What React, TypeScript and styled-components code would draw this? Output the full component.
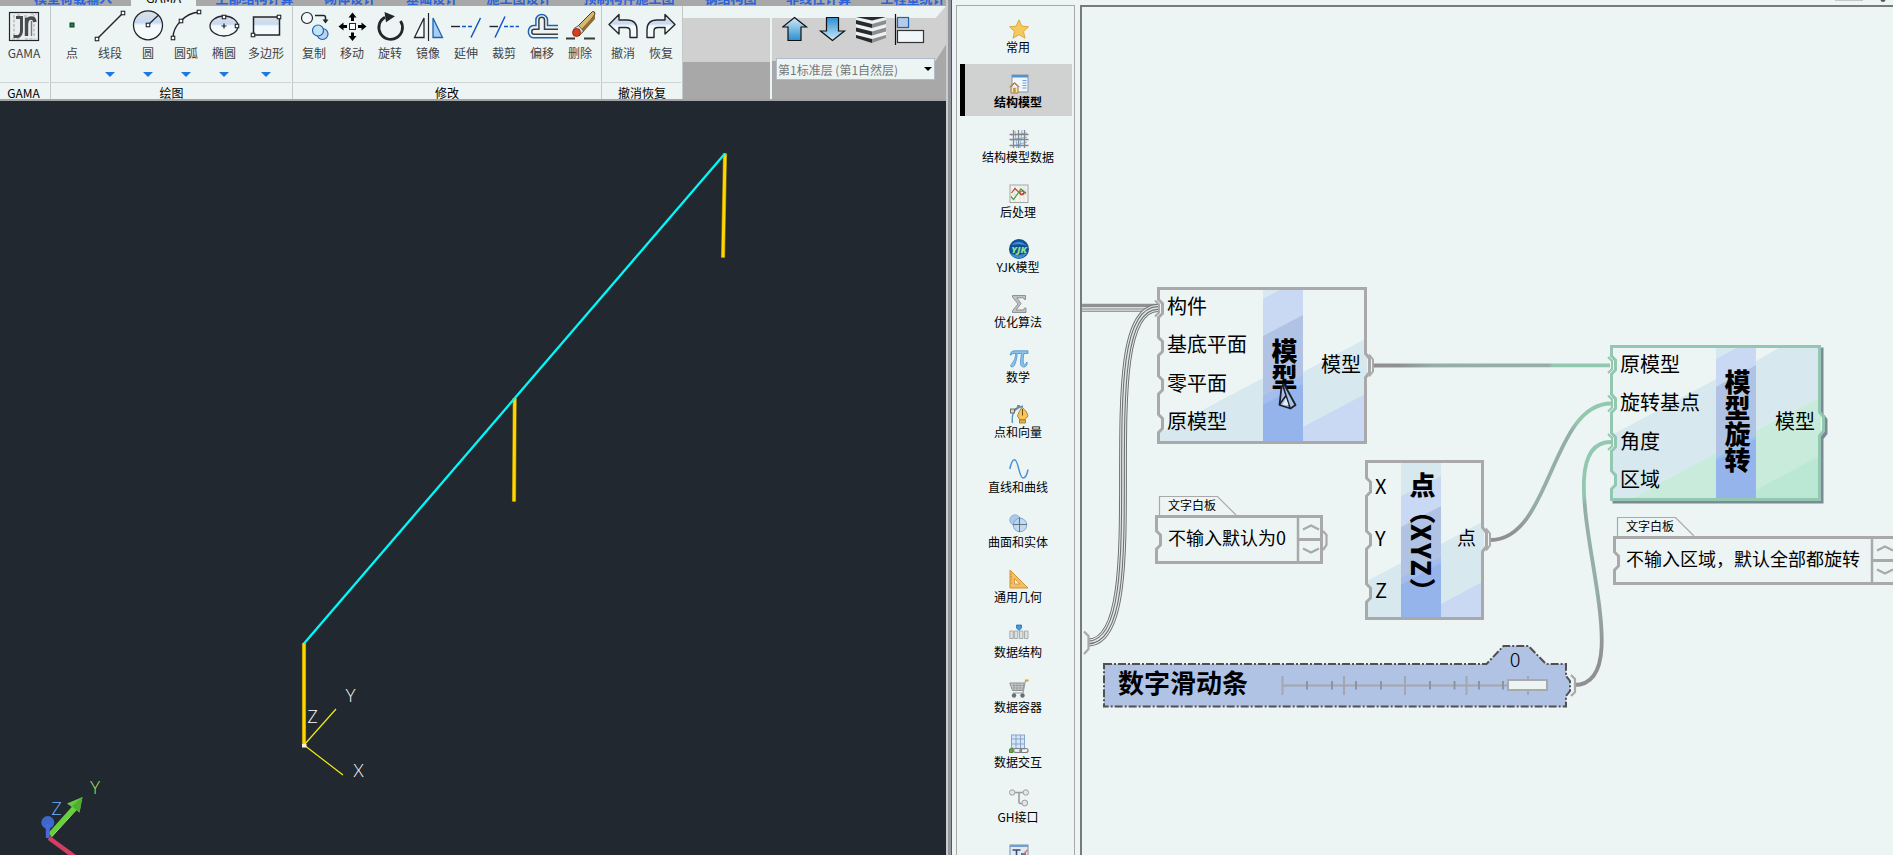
import React from "react";
import styled, { createGlobalStyle, css } from "styled-components";

const FONT = '"Noto Sans CJK SC", "Noto Sans", sans-serif';
const PAPER = "#edf5f4";
const GREY = "#a8a8a8";

const Global = createGlobalStyle`
  html, body { margin: 0; padding: 0; background: ${PAPER}; overflow: hidden; }
  * { box-sizing: border-box; }
  body { font-family: ${FONT}; color: #000; }
`;

const Screen = styled.div`
  display: flex;
  width: 1893px;
  height: 855px;
  overflow: hidden;
  background: ${PAPER};
`;

/* ---------- modelling window ---------- */

const CadWindow = styled.section`
  display: flex;
  flex-direction: column;
  width: 946px;
  flex: none;
`;

const TabStrip = styled.div`
  display: flex;
  height: 6px;
  overflow: hidden;
  background: ${GREY};
`;

const RibbonTab = styled.div<{ $w: number; $active?: boolean }>`
  width: ${(p) => p.$w}px;
  flex: none;
  height: 6px;
  text-align: center;
  white-space: nowrap;
  font-size: 13px;
  line-height: 20px;
  font-weight: ${(p) => (p.$active ? 400 : 700)};
  color: ${(p) => (p.$active ? "#111" : "#2a62dc")};
  background: ${(p) => (p.$active ? PAPER : "transparent")};
  span { display: block; margin-top: -12px; }
`;

const Ribbon = styled.div`
  display: flex;
  height: 95px;
  background: ${GREY};
  border-bottom: 2px solid #a2a4a6;
`;

const Group = styled.div<{ $w: number }>`
  display: flex;
  flex-direction: column;
  width: ${(p) => p.$w}px;
  flex: none;
  background: ${PAPER};
  border-right: 1px solid #c4c8c8;
`;

const Tools = styled.div<{ $pad?: number }>`
  display: flex;
  height: 77px;
  flex: none;
  padding: 2px 0 0 ${(p) => p.$pad ?? 2}px;
  border-bottom: 1px solid #cfd3d3;
  margin-right: 1px;
`;

const GroupName = styled.div<{ $shift?: number }>`
  height: 16px;
  padding-right: ${(p) => p.$shift ?? 0}px;
  font-size: 12px;
  line-height: 20px;
  text-align: center;
`;

const Tool = styled.div<{ $w?: number }>`
  display: flex;
  flex-direction: column;
  align-items: center;
  width: ${(p) => p.$w ?? 38}px;
  flex: none;
  white-space: nowrap;
  font-size: 12px;
  line-height: 18px;
  color: #3f4245;
  svg { flex: none; overflow: visible; }
  span { margin-top: 2px; }
`;

const DropMark = styled.i`
  margin-top: 10px;
  border: 5px solid transparent;
  border-top-color: #1f78e0;
  border-bottom: 0;
`;

const Gallery = styled.div`
  width: 87px;
  flex: none;
  background: linear-gradient(${PAPER} 12px, #d0d0d0 12px 56px, ${GREY} 56px);
`;

const LayerArea = styled.div`
  position: relative;
  display: flex;
  flex-direction: column;
  flex: 1;
  border-left: 2px solid ${PAPER};
  &::before, &::after { content: ""; position: absolute; left: 0; top: 0; right: 0; }
  &::before { height: 55px; background: #d0d0d0; clip-path: polygon(0 0, 100% 0, 100% 70%, 94% 100%, 0 100%); }
  &::after { height: 12px; background: ${PAPER}; clip-path: polygon(0 0, 100% 0, 94% 100%, 0 100%); }
`;

const LayerTools = styled.div`
  position: relative;
  z-index: 1;
  display: flex;
  padding: 7px 0 0 10px;
  height: 52px;
`;

const LayerSelect = styled.div`
  position: relative;
  z-index: 1;
  display: flex;
  align-items: center;
  justify-content: space-between;
  width: 159px;
  height: 22px;
  margin-left: 4px;
  padding: 0 2px 0 1px;
  border: 1px solid #b1bccb;
  background: ${PAPER};
  font-size: 12px;
  color: #777;
  i { border: 4px solid transparent; border-top-color: #000; border-bottom: 0; }
`;

const Viewport = styled.div`
  flex: 1;
  background: #222830;
  overflow: hidden;
  svg { display: block; }
`;

const Splitter = styled.div`
  width: 10px;
  flex: none;
  background: linear-gradient(90deg, #c9cdcd 2px, #96969e 2px 5px, #55565c 5px 6.5px, ${PAPER} 6.5px);
`;

/* ---------- graph window ---------- */

const SideList = styled.nav`
  display: flex;
  flex-direction: column;
  gap: 3px;
  width: 119px;
  height: 850px;
  flex: none;
  margin-top: 5px;
  padding: 3px 2px 0 2px;
  overflow: hidden;
  border: solid ${GREY};
  border-width: 1px 1px 0 1px;
`;

const SideItem = styled.div<{ $active?: boolean }>`
  display: flex;
  flex-direction: column;
  align-items: center;
  height: 52px;
  flex: none;
  margin: 0 0 0 1px;
  padding-top: 10px;
  font-size: 12px;
  line-height: 17px;
  white-space: nowrap;
  ${(p) =>
    p.$active &&
    css`
      background: linear-gradient(90deg, #000 5px, #d0d1d1 5px);
      font-weight: 700;
    `}
  svg { flex: none; overflow: visible; }
`;

const SideLabel = styled.span`
  margin: -1px 0 0 4px;
`;

const SideIconBox = styled.span`
  margin-left: 5px;
  height: 20px;
`;

const Canvas = styled.main`
  position: relative;
  flex: 1;
  margin: 5px 0 0 5px;
  border: solid #77797a;
  border-width: 2px 0 0 2px;
  overflow: hidden;
`;

const CaptionMarks = styled.div`
  position: absolute;
  right: 0;
  top: 0;
  svg { display: block; }
`;

const Wires = styled.svg`
  position: absolute;
  left: 0;
  top: 0;
  overflow: visible;
`;

const NodeBox = styled.div<{ $x: number; $y: number; $w: number; $h: number }>`
  position: absolute;
  left: ${(p) => p.$x - 1082}px;
  top: ${(p) => p.$y - 7}px;
  width: ${(p) => p.$w}px;
  height: ${(p) => p.$h}px;
  display: flex;
`;

const NodeFrame = styled.svg`
  position: absolute;
  left: 0;
  top: 0;
  overflow: visible;
`;

const Ports = styled.div<{ $w: number; $row: number }>`
  position: relative;
  width: ${(p) => p.$w}px;
  padding-left: 10px;
  font-size: 20px;
  line-height: ${(p) => p.$row}px;
  white-space: nowrap;
`;

const NodeTitle = styled.div<{ $pad: number }>`
  position: relative;
  width: 40px;
  padding-top: ${(p) => p.$pad}px;
  writing-mode: vertical-rl;
  font-size: 26px;
  line-height: 38px;
  font-weight: 900;
  white-space: nowrap;
`;

const TitleLatin = styled.span`
  letter-spacing: 1.8px;
`;

const OutPort = styled.div<{ $top: number; $pad: number; $size?: number }>`
  position: relative;
  flex: 1;
  padding: ${(p) => p.$top}px ${(p) => p.$pad}px 0 0;
  text-align: right;
  font-size: ${(p) => p.$size ?? 20}px;
  line-height: 30px;
  white-space: nowrap;
`;

const NoteTab = styled.div`
  position: absolute;
  left: 13px;
  top: -19px;
  font-size: 12px;
  line-height: 18px;
`;

const NoteText = styled.div`
  position: relative;
  padding-left: 13px;
  font-size: 18px;
  line-height: 45px;
  white-space: nowrap;
`;

const SliderTitle = styled.div`
  position: relative;
  padding-left: 14px;
  font-size: 26px;
  font-weight: 700;
  line-height: 36px;
  white-space: nowrap;
`;

const SliderValue = styled.div`
  position: absolute;
  left: 401px;
  top: -18px;
  width: 20px;
  text-align: center;
  font-size: 20px;
  line-height: 26px;
  font-weight: 200;
`;

/* ---------- ribbon icons ---------- */

const INK = "#22262c";
const Handle = ({ x, y }: { x: number; y: number }) => (
  <rect x={x - 1.75} y={y - 1.75} width="3.5" height="3.5" fill="#fff" stroke={INK} strokeWidth="1.1" />
);

const ToolArt: Record<string, React.ReactNode> = {
  gama: (
    <g>
      <rect x="4.500" y="4.500" width="29" height="28" fill="#e9efee" stroke={INK} strokeWidth="1.200" />
      <path d="M9 7v22M29 7v22M26 6h6M7 31h9M20 31h10M12 7h4M19 8h3" stroke="#b9bdbd" strokeWidth="1.500" strokeDasharray="3 1.500" />
      <path d="M11 9.500h5.500v13q0 5-3.500 6h-4.500" fill="none" stroke="#4a4b4e" strokeWidth="3" />
      <path d="M21.500 28V9.500M21.500 16q.5-6 4.500-6 3.500 0 4 4" fill="none" stroke="#4a4b4e" strokeWidth="3.400" />
      <path d="M26.500 13v15" stroke="#77797b" strokeWidth="1.400" />
    </g>
  ),
  point: <rect x="17" y="15" width="4" height="4" fill="#257a4c" stroke="#153a28" />,
  line: (
    <g>
      <path d="M6 31L32 5" stroke={INK} strokeWidth="1.400" />
      <Handle x={6} y={31} />
      <Handle x={32} y={5} />
    </g>
  ),
  circle: (
    <g>
      <circle cx="19" cy="17.300" r="14.500" fill="url(#band)" stroke={INK} strokeWidth="1.300" />
      <path d="M19 17L29 7.500" stroke={INK} strokeWidth="1.200" />
      <Handle x={19} y={17} />
    </g>
  ),
  arc: (
    <g>
      <path d="M6 30Q6 20 14 13Q21 5 32 4" fill="none" stroke={INK} strokeWidth="1.400" />
      <Handle x={6} y={30} />
      <Handle x={14} y={13} />
      <Handle x={32} y={4} />
    </g>
  ),
  ellipse: (
    <g>
      <ellipse cx="19" cy="18" rx="14" ry="10" fill="url(#band)" stroke={INK} strokeWidth="1.300" />
      <path d="M19 15.500v5M16.500 18h5" stroke={INK} strokeWidth="1.200" />
      <Handle x={19} y={9} />
      <Handle x={32} y={18} />
    </g>
  ),
  polygon: (
    <g>
      <rect x="6.500" y="9" width="26" height="18" fill="url(#band)" stroke={INK} strokeWidth="1.500" />
      <Handle x={32} y={9} />
      <Handle x={6} y={27} />
    </g>
  ),
  copy: (
    <g fill="none">
      <circle cx="12" cy="10" r="5.500" stroke={INK} strokeWidth="1.200" fill="#f3f8fb" />
      <path d="M20 7.500h8.500q2 0 2 2V14" stroke={INK} strokeWidth="1.500" />
      <path d="M27.500 11.500h6l-3 4z" fill={INK} />
      <circle cx="27.500" cy="26" r="5.500" stroke="#1b64b5" strokeWidth="1.200" fill="#b7d3f1" />
      <circle cx="23" cy="22.500" r="5.500" stroke="#1b64b5" strokeWidth="1.200" fill="#c3e3f6" />
    </g>
  ),
  move: (
    <g fill="#050505">
      <rect x="16.500" y="15.500" width="6" height="6" fill="#fff" stroke={INK} />
      <path d="M19.500 4.500l4 5h-2.500v3.500h-3V9.500h-2.500zM19.500 33l4-5h-2.500v-3.500h-3V28h-2.500zM5.500 18.500l5-4v2.500H14v3h-3.500v2.500zM33.500 18.500l-5-4v2.500H25v3h3.500v2.500z" />
    </g>
  ),
  rotate: (
    <g>
      <path d="M14 9.200A11.800 11.800 0 1 0 29.500 13" fill="none" stroke="#23262b" strokeWidth="2.800" />
      <path d="M13.500 4l10.500 4.200-9 6z" fill="#23262b" />
    </g>
  ),
  mirror: (
    <g>
      <path d="M15 10v19.500H5.500z" fill="#f4f9f9" stroke={INK} strokeWidth="1.300" />
      <path d="M19.500 5v28" stroke={INK} strokeWidth="1.200" />
      <path d="M24 10v19.500h9.500z" fill="#a9cdf0" stroke="#1b64b5" strokeWidth="1.300" />
    </g>
  ),
  extend: (
    <g>
      <path d="M4 18.500h9" stroke={INK} strokeWidth="1.400" />
      <path d="M15 18.500h10" stroke="#1555c8" strokeWidth="1.400" strokeDasharray="4 2" />
      <path d="M24 29.500L33.500 10" stroke="#1555c8" strokeWidth="1.500" />
    </g>
  ),
  trim: (
    <g>
      <path d="M4.500 18.500h8.500" stroke={INK} strokeWidth="1.400" />
      <path d="M10 29.500L20 8.500" stroke="#1555c8" strokeWidth="1.500" />
      <path d="M19 18.500h15" stroke="#1555c8" strokeWidth="1.400" strokeDasharray="4 1.800" />
    </g>
  ),
  offset: (
    <g fill="none">
      <path d="M35 17.500H24.500V12a5.800 5.500 0 0 0-11.600 0v5.500H10.500a5 6 0 0 0 0 12.300H35" stroke="#1b64b5" strokeWidth="1.500" />
      <path d="M35 21.200H21.500V12a2.800 2.800 0 0 0-5.600 0v9.200H11a2.200 2.500 0 0 0 0 5H35" stroke="#3b3f44" strokeWidth="1.500" />
    </g>
  ),
  erase: (
    <g>
      <path d="M5 30.500h9M23 30.500h11" stroke="#3a3a3d" strokeWidth="2" />
      <path d="M15 20L31.500 3.500q2.500-.500 2.500 2.500L21 25z" fill="#d8b872" stroke="#4b3a1d" />
      <path d="M15 27L32.500 8 34 5.500V11L21 25.500z" fill="#8d6e33" />
      <path d="M13 20.500l4.500-3 5 5.500-4 4.500z" fill="#d9dde0" stroke="#4a4d50" strokeWidth=".8" />
      <circle cx="15.500" cy="24.500" r="4" fill="#d8401a" stroke="#7a1d0a" strokeWidth=".8" />
    </g>
  ),
  undo: (
    <path d="M5 16.500L15 6.500v5.500h8q10 0 10 10v7.500h-7V23q0-3.500-4-3.500h-7v6.500z" fill="url(#band)" stroke={INK} strokeWidth="1.400" strokeLinejoin="round" />
  ),
  redo: (
    <path d="M33 16.500L23 6.500v5.500h-8Q5 12 5 22v7.500h7V23q0-3.500 4-3.500h7v6.500z" fill="url(#band)" stroke={INK} strokeWidth="1.400" strokeLinejoin="round" />
  ),
};

const ToolIcon = ({ name }: { name: string }) => (
  <svg width="38" height="34" viewBox="0 0 38 34">
    <defs>
      <linearGradient id="band" x1="0" y1="0" x2="0" y2="1">
        <stop offset="0.100" stopColor="#d9dfe6" />
        <stop offset="0.400" stopColor="#c6d9f3" />
        <stop offset="0.500" stopColor="#f4f9fb" />
        <stop offset="1" stopColor="#f4f9fb" />
      </linearGradient>
    </defs>
    {ToolArt[name]}
  </svg>
);

const ribbonTabs: [string, number, boolean?][] = [
  ["模型荷载输入", 78], ["GAMA", 65, true], ["上部结构计算", 117], ["砌体设计", 74], ["基础设计", 90],
  ["施工图设计", 84], ["预制构件施工图", 136], ["钢结构图", 67], ["非线性计算", 109], ["工程量统计", 80],
];

type ToolSpec = { art: string; name: string; w?: number; drop?: boolean };

const groups: { name: string; w: number; pad?: number; shift?: number; tools: ToolSpec[] }[] = [
  { name: "GAMA", w: 51, pad: 5, shift: 3, tools: [{ art: "gama", name: "GAMA" }] },
  {
    name: "绘图", w: 242,
    tools: [
      { art: "point", name: "点" },
      { art: "line", name: "线段", drop: true },
      { art: "circle", name: "圆", drop: true },
      { art: "arc", name: "圆弧", drop: true },
      { art: "ellipse", name: "椭圆", drop: true },
      { art: "polygon", name: "多边形", drop: true, w: 46 },
    ],
  },
  {
    name: "修改", w: 309,
    tools: [
      { art: "copy", name: "复制" }, { art: "move", name: "移动" }, { art: "rotate", name: "旋转" },
      { art: "mirror", name: "镜像" }, { art: "extend", name: "延伸" }, { art: "trim", name: "裁剪" },
      { art: "offset", name: "偏移" }, { art: "erase", name: "删除" },
    ],
  },
  { name: "撤消恢复", w: 81, tools: [{ art: "undo", name: "撤消" }, { art: "redo", name: "恢复" }] },
];

const LayerIcons = () => (
  <svg width="155" height="36" viewBox="782 13 155 36">
    <defs>
      <linearGradient id="up" x1="0" y1="0" x2="0" y2="1">
        <stop offset="0" stopColor="#cfeaf8" />
        <stop offset="1" stopColor="#2b8fd2" />
      </linearGradient>
      <linearGradient id="down" x1="0" y1="0" x2="0" y2="1">
        <stop offset="0" stopColor="#2b8fd2" />
        <stop offset="1" stopColor="#cfeaf8" />
      </linearGradient>
    </defs>
    <path d="M794.500 17.500l12 9.500h-5.500v13.500h-13V27h-5.500z" fill="url(#up)" stroke="#111" strokeWidth="1.200" />
    <path d="M832.500 40.500l-12-9.500h6V17.500h12V31h6z" fill="url(#down)" stroke="#111" strokeWidth="1.200" />
    <path d="M856 17h30v21l-14 5-16-5z" fill="#eef1f1" />
    <path d="M856 17h30l-14 3.500zM856 20l16 4v4l-16-4zM856 27.500l16 4v4l-16-4zM856 35l16 4v4l-16-5z" fill="#262a2e" />
    <path d="M886 20l-14 4v4l14-4zM886 27.500l-14 4v4l14-4zM886 35l-14 4v4l14-5z" fill="#8b8d8f" />
    <path d="M895.500 14v31" stroke="#111" strokeWidth="1.200" />
    <rect x="897.500" y="17.500" width="11" height="10" fill="#b5cbe9" stroke="#1f62ad" strokeWidth="1.200" />
    <rect x="897.500" y="30.500" width="26" height="12" fill="#f1f6fa" stroke="#333" strokeWidth="1.200" />
  </svg>
);

const Model = () => (
  <svg width="946" height="754" viewBox="0 101 946 754">
    <g stroke="#9a8008" strokeWidth="4.200">
      <path d="M304 643V745M514.700 398L514 501.500M725 153.500L723 257.500" />
      <path d="M304 643V745M514.700 398L514 501.500M725 153.500L723 257.500" stroke="#ffd600" strokeWidth="2.900" />
    </g>
    <path d="M304 643.500L725 153.500" stroke="#00fafa" strokeWidth="2.300" />
    <path d="M304 745L336 709M304 745L343 775" stroke="#f4ec10" strokeWidth="1.200" />
    <rect x="302" y="744" width="4.500" height="3.500" fill="#f2f2e0" />
    <g fontFamily="Lato, sans-serif" fontWeight="300" fontSize="17" fill="#ffffff" textAnchor="middle">
      <text x="350.500" y="702">Y</text>
      <text x="312.500" y="722.500">Z</text>
      <text x="358.500" y="776.500">X</text>
      <text x="95" y="793.500" fill="#a6f25a">Y</text>
      <text x="56.500" y="814.500" fill="#6fb2ff">Z</text>
    </g>
    <path d="M49 838L75 857" stroke="#d23f63" strokeWidth="4.500" />
    <path d="M50 835L76 806" stroke="#66cf3c" strokeWidth="5" />
    <path d="M51.500 837L78 808" stroke="#92ea6c" strokeWidth="1" />
    <path d="M82.500 797L67 803.500l12.500 9z" fill="#66c83e" />
    <path d="M82.500 797L72 806l7.500 6.500z" fill="#4fae30" />
    <circle cx="47.800" cy="822.500" r="6.500" fill="#3c68cc" />
    <path d="M47.800 824V838" stroke="#4a68de" strokeWidth="4" />
  </svg>
);

/* ---------- sidebar icons, 20 x 20 ---------- */

const sideItems: { name: string; active?: boolean; art: React.ReactNode }[] = [
  {
    name: "常用",
    art: <path d="M10 .8l2.800 6.300 6.700.7-5 4.600 1.500 6.800-6-3.500-6 3.500 1.500-6.800-5-4.600 6.700-.7z" fill="#f6c95c" stroke="#d9a23a" strokeWidth=".9" />,
  },
  {
    name: "结构模型", active: true,
    art: (
      <g>
        <rect x="3" y="1" width="16" height="17" fill="#f1f6fb" stroke="#8398b0" />
        <rect x="3" y="1" width="16" height="2.500" fill="#4c93dc" />
        <path d="M13.500 6.500h4M13.500 9h4M13.500 11.500h4M13.500 14h4" stroke="#6d9fd6" />
        <path d="M.5 13L5.500 8.500 10.500 13M2 12.500V19h7v-6.500L5.500 9.500z" fill="#f3e3bd" stroke="#a77835" />
        <rect x="4.200" y="14" width="2.500" height="4.500" fill="#c98d45" />
      </g>
    ),
  },
  {
    name: "结构模型数据",
    art: (
      <g fill="none">
        <path d="M2 6l16-2M2 11l16-3M4 17l14-4M6 2l2 17M13 1l-2 18" stroke="#7fb2e2" />
        <path d="M.5 5.500h19M.5 10.500h19M.5 16.500h19M4.500 1v18M9.500 1v18M15.500 1v18" stroke="#85878c" strokeWidth="1.300" />
      </g>
    ),
  },
  {
    name: "后处理",
    art: (
      <g fill="none">
        <rect x="1" y="1" width="18" height="17.500" fill="#f4f4ef" stroke="#a3a6a6" />
        <path d="M2 6h16M2 11h16M6 2v16M11 2v16M15 2v16" stroke="#d5d8d6" strokeWidth=".7" />
        <path d="M2.500 9L6 4.500l6 6 5-2.500" stroke="#c93a2d" strokeWidth="1.200" />
        <path d="M2 12.500l2.500 3L12 5l5 4.500" stroke="#4a9a3c" strokeWidth="1.200" />
        <circle cx="13" cy="9" r="2" stroke="#c93a2d" />
      </g>
    ),
  },
  {
    name: "YJK模型",
    art: (
      <g>
        <circle cx="10" cy="10" r="10" fill="#0f4f95" />
        <path d="M2 6q8-7 16 1-5-3-16-1zM1.500 14q9 5 17-1-3 6-8.500 6.500-6-.5-8.500-5.500z" fill="#3f8fd6" />
        <text x="10" y="13.500" textAnchor="middle" fontFamily="Open Sans, sans-serif" fontStyle="italic" fontWeight="800" fontSize="9.500" fill="#8fe08a">YJK</text>
      </g>
    ),
  },
  {
    name: "优化算法",
    art: <path d="M3.500 1.500h13v4h-1.200l-.8-1.700H7.800L12 9.500l-5 6.500h7.500l1-2H17v4.500H3.500v-1.800L9 10 3.500 3z" fill="#c2c2c2" stroke="#8f9192" strokeWidth="1" />,
  },
  {
    name: "数学",
    art: <path d="M1 6Q2 1.800 5 1.800h14v2.700h-4.200q-.8 5-.6 8.500.2 2.700 1.500 2.700 1.300 0 1.600-2.200h1q-.3 4.500-3.500 4.500-3.300 0-3.300-4.300 0-3.400 1-9.200H8.300Q7.800 11 6 15.200 4.800 18 3.200 18q-1.500 0-1.500-1.300 0-1 1.500-2.400Q6 11.500 7 4.500H5Q3 4.500 2 6z" fill="#8cc3ee" stroke="#4d8fca" strokeWidth=".8" />,
  },
  {
    name: "点和向量",
    art: (
      <g>
        <path d="M3.500 19Q2.500 10 6 6.500T14 2" fill="none" stroke="#5f95c4" strokeWidth="1.500" />
        <path d="M2 8L11 1.500" stroke="#555" />
        <rect x="1.500" y="5" width="4" height="4" fill="#cfd3d6" stroke="#555" strokeWidth=".8" />
        <rect x="8" y="1" width="3" height="3" fill="#888" />
        <path d="M13 3l4.500 5 1.500 4-3.500 4h-4.500L8.500 12l1.500-4z" fill="#f4c758" stroke="#a9792a" strokeWidth=".9" />
        <path d="M13.500 5v6.500" stroke="#704c12" />
        <rect x="10.500" y="16" width="6" height="3" fill="#e8b54a" stroke="#8a6422" strokeWidth=".7" />
      </g>
    ),
  },
  {
    name: "直线和曲线",
    art: <path d="M.8 10C2.500 2 4 .8 5.500 .8 9.500 .8 10 19 14 19c2 0 3.800-2.500 5-8.500" fill="none" stroke="#4a93d4" strokeWidth="1.500" />,
  },
  {
    name: "曲面和实体",
    art: (
      <g>
        <circle cx="6" cy="6" r="5.200" fill="#a8ccee" stroke="#8fb4da" />
        <circle cx="11" cy="11" r="6.800" fill="#b9d5ee" fillOpacity=".8" stroke="#7fa6cf" />
        <path d="M4 10.500h14M10.500 3v15" stroke="#5c6b7b" strokeWidth=".9" />
      </g>
    ),
  },
  {
    name: "通用几何",
    art: (
      <g>
        <path d="M1 1v18h18z" fill="#f3bf62" stroke="#cf9332" strokeWidth="1" />
        <path d="M5.500 9.500v5.500h5.500z" fill={PAPER} stroke="#cf9332" strokeWidth=".9" />
        <path d="M1.500 5h1.500M1.500 8h1.500M1.500 11h1.500M1.500 14h1.500" stroke="#a9701f" strokeWidth=".7" />
      </g>
    ),
  },
  {
    name: "数据结构",
    art: (
      <g>
        <path d="M.8 7h3.500v7.500H.8zM5.300 7h3.500v7.500H5.300zM10.500 7H14v7.500h-3.500zM15.500 7H19v7.500h-3.500z" fill="#dde0e1" stroke="#a9acae" />
        <path d="M7.500 1h5v3L10 6.500 7.500 4z" fill="#3f9ae0" stroke="#1f6fb5" strokeWidth=".8" />
      </g>
    ),
  },
  {
    name: "数据容器",
    art: (
      <g>
        <path d="M.8 4h14.500l-1.500 7.500H3.500z" fill="#c9cccd" stroke="#8d9092" />
        <path d="M3 6.500h12M3.500 9h11M5 4v7M8 4v7M11 4v7" stroke="#8d9092" strokeWidth=".7" />
        <path d="M19 1.500h-2.500L14 14H4" fill="none" stroke="#9a9d9f" strokeWidth="1.200" />
        <rect x="16" y=".5" width="3.500" height="2" fill="#e39b2d" />
        <circle cx="5" cy="16.500" r="2.200" fill="#6b6e70" />
        <circle cx="13.500" cy="16.500" r="2.200" fill="#6b6e70" />
      </g>
    ),
  },
  {
    name: "数据交互",
    art: (
      <g fill="none">
        <rect x="2.500" y="1" width="13" height="14" fill="#d7e6f7" stroke="#86a6cc" />
        <path d="M2.500 5h13M2.500 10h13M7 1v14M11.500 1v14" stroke="#86a6cc" />
        <path d="M.5 18.500V15l3.500-1v4.500z" fill="#6aa84f" stroke="#4f8a37" />
        <rect x="4.500" y="14.500" width="8" height="4" rx="2" fill="#e8eaea" stroke="#7b7f82" strokeWidth="1.200" />
        <rect x="11" y="14.500" width="8" height="4" rx="2" stroke="#7b7f82" strokeWidth="1.200" />
      </g>
    ),
  },
  {
    name: "GH接口",
    art: (
      <g fill="none" stroke="#9b9d9e">
        <path d="M5 3.500h10M10 3.500V13q0 1.500 2 1.500h2" strokeWidth="1.600" />
        <circle cx="3.200" cy="3.500" r="2.700" fill="#e3e5e6" />
        <circle cx="16.800" cy="3.500" r="2.700" fill="#e3e5e6" />
        <circle cx="15.800" cy="14" r="2.900" fill="#e3e5e6" />
      </g>
    ),
  },
  {
    name: "",
    art: (
      <g>
        <rect x="1" y="1" width="18" height="18" fill="#dfeaf5" stroke="#7e8fa3" />
        <rect x="1" y="1" width="18" height="2" fill="#6d9fd2" />
        <path d="M3.500 6h8M7.500 6v10M12 10h5" stroke="#3a4d66" strokeWidth="1.600" />
        <path d="M18.500 6l-4 4" stroke="#d97b6b" strokeWidth="1.600" />
      </g>
    ),
  },
];

/* ---------- nodes ---------- */

const outline = (x0: number, y0: number, x1: number, y1: number, ins: number[], outs: number[]) => {
  let d = `M${x0} ${y0}H${x1}`;
  outs.forEach((y) => { d += `V${y - 12}L${x1 + 4} ${y - 7}V${y + 7}L${x1} ${y + 12}`; });
  d += `V${y1}H${x0}`;
  [...ins].reverse().forEach((y) => { d += `V${y + 9}L${x0 + 4} ${y + 5}V${y - 5}L${x0} ${y - 9}`; });
  return d + "Z";
};

const inBrace = (y: number) => `M-2 ${y - 8}L2 ${y - 4}V${y + 4}L-2 ${y + 8}`;
const outBrace = (w: number, y: number) => `M${w + 2} ${y - 11}L${w + 6} ${y - 6}V${y + 6}L${w + 2} ${y + 11}`;

type Band = [string, string];

interface GraphNodeProps {
  id: string;
  x: number; y: number; w: number; h: number;
  stroke?: string;
  shadow?: boolean;
  ins: number[];
  outs: number[];
  linkedIn?: number[];
  linkedOut?: number[];
  bands: Band[];
  children: React.ReactNode;
}

const GraphNode = ({ id, x, y, w, h, stroke = "#a9a9a9", shadow, ins, outs, linkedIn = [], linkedOut = [], bands, children }: GraphNodeProps) => {
  const d = outline(1.5, 1.5, w - 1.5, h - 1.5, ins, outs);
  return (
    <NodeBox $x={x} $y={y} $w={w} $h={h}>
      <NodeFrame width={w} height={h}>
        <clipPath id={id}><path d={d} /></clipPath>
        {shadow && <path d={d} transform="translate(2.500 2.500)" fill="#7c8a95" stroke="#7c8a95" strokeWidth="3" />}
        <path d={d} fill={PAPER} />
        <g clipPath={`url(#${id})`}>
          {bands.map(([points, fill], i) => <polygon key={i} points={points} fill={fill} />)}
        </g>
        <path d={d} fill="none" stroke={stroke} strokeWidth="3" />
        {linkedIn.map((v) => <path key={v} d={inBrace(v)} fill="none" stroke={stroke} strokeWidth="2" />)}
        {linkedOut.map((v) => <path key={v} d={outBrace(w, v)} fill="none" stroke={stroke} strokeWidth="2" />)}
      </NodeFrame>
      {children}
    </NodeBox>
  );
};

const NoteNode = ({ x, y, w, text }: { x: number; y: number; w: number; text: string }) => {
  const sx = w - 25;
  return (
    <NodeBox $x={x} $y={y} $w={w} $h={49}>
      <NodeFrame width={w} height="49" fill="none" stroke="#a9a9a9">
        <path d="M4.500 1V-18.500H62.500L81 0" strokeWidth="1.200" />
        <path d={outline(1.5, 1.5, w - 1.5, 47.5, [25], [])} strokeWidth="3" />
        <path d={`M${sx} 2V47`} strokeWidth="2.500" />
        <path d={`M${sx} 24.500H${w - 1}`} strokeWidth="3" />
        <path d={`M${sx + 5} 14.500l8-4 8 4M${sx + 5} 33.500l8 4 8-4`} strokeWidth="2.400" />
        <path d={`M${w} 16l3.500 4v10l-3.500 5`} strokeWidth="2.200" />
      </NodeFrame>
      <NoteTab>文字白板</NoteTab>
      <NoteText>{text}</NoteText>
    </NodeBox>
  );
};

const WHITE_BLUE = "#d7e9ef";
const PALE_BLUE = "#cad9f3";
const MID_BLUE = "#b1c3e4";
const DEEP_BLUE = "#95b4ec";

const SliderNode = () => {
  const shape = "M0 0H382.500L399.500-18H424.500L442 0H462V12L466 17V27L462 32V42.500H0Z";
  const major = [178.500, 240, 301, 362.500, 424];
  const minor = [203, 228, 252, 277, 326, 350.500, 375, 399];
  return (
    <NodeBox $x={1104} $y={664} $w={463} $h={43}>
      <NodeFrame width="463" height="43">
        <path d={shape} fill="#b1c3e5" stroke="#505050" strokeWidth="2" strokeDasharray="8 2 2 2" />
        <g stroke="#a2a6ae" strokeWidth="2">
          <path d="M178 21.500H404" />
          {major.map((v) => <path key={v} d={`M${v} 12V31`} />)}
          {minor.map((v) => <path key={v} d={`M${v} 17V25.500`} stroke="#8d949c" />)}
        </g>
        <rect x="404" y="16" width="39" height="10" fill={PAPER} stroke="#a9a9a9" strokeWidth="2" />
        <path d="M467 11l4 4v13l-4 4" fill="none" stroke="#a9a9a9" strokeWidth="2.200" />
      </NodeFrame>
      <SliderTitle>数字滑动条</SliderTitle>
      <SliderValue>0</SliderValue>
    </NodeBox>
  );
};

const bundle = "M1088 642.500C1158 642.500 1088 308 1158 308";

const Connections = () => (
  <Wires width="811" height="848" viewBox="1082 7 811 848" fill="none">
    <defs>
      <linearGradient id="w1" gradientUnits="userSpaceOnUse" x1="1373" y1="0" x2="1610" y2="0">
        <stop offset=".1" stopColor="#909090" />
        <stop offset=".25" stopColor="#95aeaa" />
        <stop offset=".74" stopColor="#95aeaa" />
        <stop offset=".76" stopColor="#93c8b0" />
      </linearGradient>
      <linearGradient id="w2" gradientUnits="userSpaceOnUse" x1="1491" y1="540" x2="1610" y2="403">
        <stop offset=".1" stopColor="#909090" />
        <stop offset=".3" stopColor="#95aeaa" />
        <stop offset=".74" stopColor="#95aeaa" />
        <stop offset=".8" stopColor="#93c8b0" />
      </linearGradient>
      <linearGradient id="w3" gradientUnits="userSpaceOnUse" x1="0" y1="685" x2="0" y2="442">
        <stop offset=".1" stopColor="#909090" />
        <stop offset=".4" stopColor="#95aeaa" />
        <stop offset=".74" stopColor="#95aeaa" />
        <stop offset=".78" stopColor="#93c8b0" />
      </linearGradient>
    </defs>
    <path d="M1082 305.500H1158" stroke="#909292" strokeWidth="3.600" />
    <path d="M1082 309H1158M1082 311.200H1158" stroke="#777" strokeWidth="1" />
    <path d={bundle} stroke="#6f7272" strokeWidth="7.800" />
    <path d={bundle} stroke="#e6edec" strokeWidth="5.800" />
    <path d={bundle} stroke="#6f7272" strokeWidth="3.800" />
    <path d={bundle} stroke="#dfe6e5" strokeWidth="1.600" />
    <path d="M1084 631.500l4.500 4.500v13l-4.500 5" stroke="#a9a9a9" strokeWidth="2.200" />
    <path d="M1374 365.500L1610 365.400" stroke="url(#w1)" strokeWidth="3.800" />
    <path d="M1491 540C1551 540 1551 403.500 1611 403.500" stroke="url(#w2)" strokeWidth="3.800" />
    <path d="M1574 685C1651 685 1535 442 1611 442" stroke="url(#w3)" strokeWidth="3.800" />
  </Wires>
);

const Pointer = styled.svg`
  position: absolute;
  left: 196px;
  top: 376px;
`;

const App = () => (
  <Screen>
    <Global />
    <CadWindow>
      <TabStrip>
        <RibbonTab $w={34} />
        {ribbonTabs.map(([label, w, active], i) => (
          <React.Fragment key={label}>
            <RibbonTab $w={w} $active={active}><span>{label}</span></RibbonTab>
            {i === 0 && <RibbonTab $w={19} />}
          </React.Fragment>
        ))}
      </TabStrip>
      <Ribbon>
        {groups.map((g) => (
          <Group key={g.name} $w={g.w}>
            <Tools $pad={g.pad}>
              {g.tools.map((t) => (
                <Tool key={t.name} $w={t.w}>
                  <ToolIcon name={t.art} />
                  <span>{t.name}</span>
                  {t.drop && <DropMark />}
                </Tool>
              ))}
            </Tools>
            <GroupName $shift={g.shift}>{g.name}</GroupName>
          </Group>
        ))}
        <Gallery />
        <LayerArea>
          <LayerTools><LayerIcons /></LayerTools>
          <LayerSelect>第1标准层 (第1自然层)<i /></LayerSelect>
        </LayerArea>
      </Ribbon>
      <Viewport><Model /></Viewport>
    </CadWindow>
    <Splitter />
    <SideList>
      {sideItems.map((s, i) => (
        <SideItem key={i} $active={s.active}>
          <SideIconBox><svg width="20" height="20" viewBox="0 0 20 20">{s.art}</svg></SideIconBox>
          <SideLabel>{s.name}</SideLabel>
        </SideItem>
      ))}
    </SideList>
    <Canvas>
      <Connections />
      <GraphNode
        id="n-model" x={1157} y={287} w={210} h={157}
        ins={[21.5, 59.500, 98, 136.500]} outs={[78.500]} linkedIn={[21.5]} linkedOut={[78.500]}
        bands={[
          ["0,147 106,91 106,157 0,157", WHITE_BLUE],
          ["146,85 210,51 210,157 146,157", WHITE_BLUE],
          ["146,140 210,106 210,157 146,157", PALE_BLUE],
          ["106,0 146,0 146,157 106,157", PALE_BLUE],
          ["106,0 128,0 106,12", WHITE_BLUE],
          ["106,49 146,28 146,157 106,157", MID_BLUE],
          ["106,109 146,88 146,157 106,157", "#a2bdee"],
          ["106,118 146,97 146,157 106,157", DEEP_BLUE],
        ]}
      >
        <Ports $w={106} $row={38.3}>
          <div>构件</div><div>基底平面</div><div>零平面</div><div>原模型</div>
        </Ports>
        <NodeTitle $pad={51}>模型</NodeTitle>
        <OutPort $top={62} $pad={6}>模型</OutPort>
      </GraphNode>

      <GraphNode
        id="n-point" x={1365} y={460} w={119} h={160}
        ins={[27, 80, 133]} outs={[79.500]} linkedOut={[79.500]}
        bands={[
          ["0,122 36,103 36,160 0,160", WHITE_BLUE],
          ["76,84 119,61 119,160 76,160", WHITE_BLUE],
          ["76,144 119,121 119,160 76,160", PALE_BLUE],
          ["36,0 76,0 76,160 36,160", PALE_BLUE],
          ["36,0 60,0 36,15", WHITE_BLUE],
          ["36,0 76,0 76,16 36,36", WHITE_BLUE],
          ["36,67 76,46 76,160 36,160", MID_BLUE],
          ["36,118 76,97 76,160 36,160", "#a2bdee"],
          ["36,125 76,103 76,160 36,160", DEEP_BLUE],
        ]}
      >
        <Ports $w={36} $row={52.2}>
          <div>X</div><div>Y</div><div>Z</div>
        </Ports>
        <NodeTitle $pad={12}>点（<TitleLatin>XYZ</TitleLatin>）</NodeTitle>
        <OutPort $top={62} $pad={8} $size={19}>点</OutPort>
      </GraphNode>

      <GraphNode
        id="n-rotate" x={1610} y={345} w={211} h={156} stroke="#94c7af" shadow
        ins={[20, 58.500, 97, 135]} outs={[79]} linkedIn={[20, 58.500, 97]}
        bands={[
          ["0,91 106,34 106,156 0,156", WHITE_BLUE],
          ["18,156 106,108 106,156", "#c9ebdb"],
          ["146,16 174,0 211,0 211,156 146,156", WHITE_BLUE],
          ["146,86 211,52 211,156 146,156", "#c9ebdb"],
          ["146,145 211,110 211,156 146,156", "#bbe8d5"],
          ["106,0 146,0 146,156 106,156", PALE_BLUE],
          ["106,0 132,0 106,14", WHITE_BLUE],
          ["106,42 146,20 146,156 106,156", MID_BLUE],
          ["106,113 146,91 146,156 106,156", "#8ec4f2"],
          ["106,116 146,94 146,156 106,156", DEEP_BLUE],
        ]}
      >
        <Ports $w={106} $row={38.3}>
          <div>原模型</div><div>旋转基点</div><div>角度</div><div>区域</div>
        </Ports>
        <NodeTitle $pad={24}>模型旋转</NodeTitle>
        <OutPort $top={61} $pad={6}>模型</OutPort>
      </GraphNode>

      <NoteNode x={1155} y={515} w={168} text="不输入默认为0" />
      <NoteNode x={1613} y={536} w={284} text="不输入区域，默认全部都旋转" />
      <SliderNode />

      <Pointer width="20" height="30" viewBox="1278 383 20 30">
        <path d="M1281.500 387l2.500-3 11.500 21-5 3.500-11-3.500z" fill="#a9c0ec" fillOpacity=".8" stroke="#1c2126" strokeWidth="1.800" strokeLinejoin="round" />
        <path d="M1279.500 404.500l6.500-9 4 12.500M1283 386l3 9.500" fill="none" stroke="#1c2126" strokeWidth="1.600" />
        <path d="M1286 398l2.500 7h-6z" fill="#e6ecf6" />
      </Pointer>
    </Canvas>
    <CaptionMarks>
      <svg width="60" height="3">
        <rect x="2" y="0" width="28" height="1" fill="#c2c6c6" />
        <circle cx="50" cy="-.5" r="2.500" fill="#55585a" />
      </svg>
    </CaptionMarks>
  </Screen>
);

export default App;
